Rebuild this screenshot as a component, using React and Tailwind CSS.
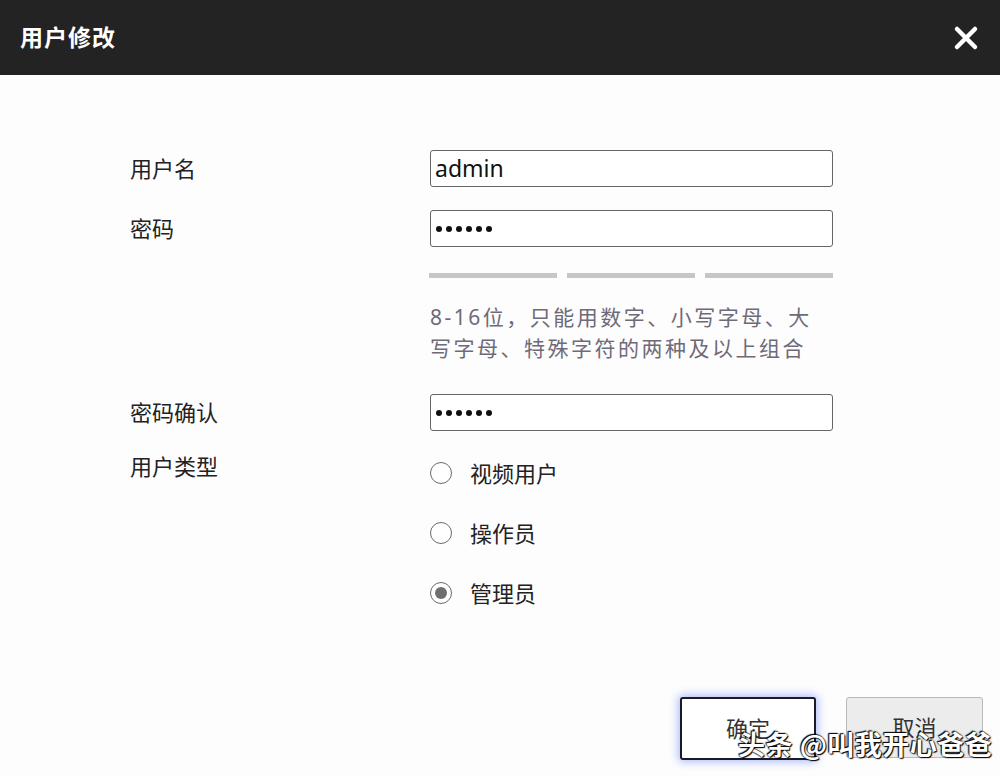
import React, { useState } from 'react';

const font = { fontFamily: '"Noto Sans", "Noto Sans CJK SC", sans-serif' };

function Radio({ label, checked, onPick }) {
  return (
    <label className="flex items-center h-[60px] cursor-pointer" onClick={onPick}>
      <span className="w-[22px] h-[22px] rounded-full border border-[#6b6b6b] bg-white flex items-center justify-center">
        {checked && <span className="w-[12px] h-[12px] rounded-full bg-[#6e6e6e]" />}
      </span>
      <span className="ml-[18px] text-[22px] text-[#222]">{label}</span>
    </label>
  );
}

function Dots() {
  return (
    <span className="flex gap-[4px] items-center">
      {[0, 1, 2, 3, 4, 5].map(i => (
        <span key={i} className="w-[6px] h-[6px] rounded-full bg-[#111]" />
      ))}
    </span>
  );
}

export default function App() {
  const [type, setType] = useState('admin');

  return (
    <div className="w-[1000px] h-[776px] bg-[#fdfdfe] flex flex-col relative overflow-hidden" style={font}>
      {/* 标题栏 */}
      <div className="h-[75px] bg-[#232323] flex items-center justify-between px-[20px] shrink-0">
        <span className="text-white text-[23px] font-bold tracking-[1px]">用户修改</span>
        <svg width="26" height="26" viewBox="0 0 26 26" className="mr-[1px]">
          <path d="M4 4 L22 22 M22 4 L4 22" stroke="#fff" strokeWidth="4.5" strokeLinecap="round" />
        </svg>
      </div>

      {/* 表单 */}
      <div className="flex-1 pt-[75px] pl-[130px]">
        <div className="flex items-center h-[37px]">
          <span className="w-[300px] text-[22px] text-[#222]">用户名</span>
          <div className="w-[403px] h-[37px] border border-[#666] rounded-[3px] bg-white flex items-center px-[4px] text-[23px] text-[#111]">admin</div>
        </div>

        <div className="flex items-center h-[37px] mt-[23px]">
          <span className="w-[300px] text-[22px] text-[#222]">密码</span>
          <div className="w-[403px] h-[37px] border border-[#666] rounded-[3px] bg-white flex items-center px-[5px]"><Dots /></div>
        </div>

        <div className="ml-[299px] mt-[26px] flex gap-[10px] w-[404px]">
          <div className="flex-1 h-[5px] bg-[#c6c6c6]" />
          <div className="flex-1 h-[5px] bg-[#c6c6c6]" />
          <div className="flex-1 h-[5px] bg-[#c6c6c6]" />
        </div>

        <div className="ml-[300px] mt-[24px] w-[392px] text-[21px] leading-[31px] tracking-[2.5px] text-[#6f6a78]">
          8-16位，只能用数字、小写字母、大写字母、特殊字符的两种及以上组合
        </div>

        <div className="flex items-center h-[37px] mt-[30px]">
          <span className="w-[300px] text-[22px] text-[#222]">密码确认</span>
          <div className="w-[403px] h-[37px] border border-[#666] rounded-[3px] bg-white flex items-center px-[5px]"><Dots /></div>
        </div>

        <div className="flex mt-[12px]">
          <span className="w-[300px] text-[22px] text-[#222] leading-[28px] pt-[9px]">用户类型</span>
          <div className="flex flex-col">
            <Radio label="视频用户" checked={type === 'video'} onPick={() => setType('video')} />
            <Radio label="操作员" checked={type === 'op'} onPick={() => setType('op')} />
            <Radio label="管理员" checked={type === 'admin'} onPick={() => setType('admin')} />
          </div>
        </div>
      </div>

      {/* 按钮 */}
      <div className="flex justify-end gap-[30px] pr-[17px] pb-[16px] shrink-0">
        <button className="w-[136px] h-[63px] border-2 border-[#1a1a2a] rounded-[3px] bg-white text-[22px] text-[#333] shadow-[0_0_8px_2px_rgba(80,110,240,0.45)]">确定</button>
        <button className="w-[137px] h-[61px] border border-[#b8b8b8] rounded-[3px] bg-[#ececec] text-[22px] text-[#333]">取消</button>
      </div>

      {/* 水印 */}
      <div
        className="absolute left-[738px] top-[724px] text-[27px] text-white font-bold tracking-[0.5px] whitespace-nowrap"
        style={{ fontFamily: '"Noto Sans CJK SC", sans-serif', textShadow: '0 0 2px #000, 1px 1px 1px #000, -1px -1px 1px #000' }}
      >
        头条 @叫我开心爸爸
      </div>
    </div>
  );
}
